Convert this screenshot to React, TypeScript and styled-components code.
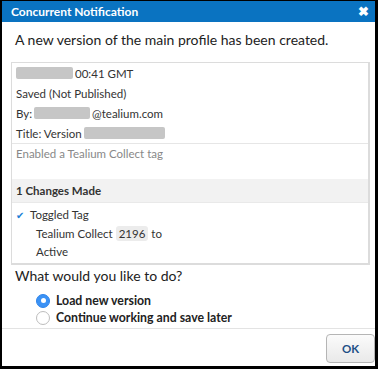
import React from "react";
import styled, { createGlobalStyle } from "styled-components";

const Global = createGlobalStyle`
  html, body { margin: 0; padding: 0; background: #000; }
  body { font-family: Lato, "Open Sans", sans-serif; }
  * { box-sizing: border-box; }
`;

const Frame = styled.div`
  width: 378px;
  height: 369px;
  background: #000;
  padding: 1px 3px 3px 2px;
`;

const Dialog = styled.div`
  width: 100%;
  height: 100%;
  background: #fff;
  display: flex;
  flex-direction: column;
  overflow: hidden;
  white-space: nowrap;
`;

const TitleBar = styled.div`
  height: 21px;
  flex-shrink: 0;
  background: #0a73c1;
  color: #fff;
  display: flex;
  align-items: center;
  justify-content: space-between;
  padding: 0 6px 0 9px;
  font-weight: bold;
  font-size: 12px;
`;

const Close = styled.span`
  font-size: 13px;
  font-weight: bold;
  line-height: 1;
`;

const Lead = styled.div`
  font-size: 14px;
  color: #222;
  padding: 9px 0 0 13px;
  height: 40px;
  flex-shrink: 0;
`;

const Box = styled.div`
  margin: 0 5px 0 9px;
  border: 1px solid #dcdcdc;
  border-bottom-width: 2px;
  border-right-width: 2px;
  display: flex;
  flex-direction: column;
  font-size: 11.5px;
  color: #333;
  flex-shrink: 0;
`;

const Meta = styled.div`
  padding: 0 4px;
  border-bottom: 1px solid #e6e6e6;
`;

const Line = styled.div`
  height: 20px;
  display: flex;
  align-items: center;
  gap: 2px;
`;

const Blur = styled.span<{ w: number }>`
  display: inline-block;
  width: ${(p) => p.w}px;
  height: 12px;
  background: #c6c6c6;
  border-radius: 2px;
`;

const Note = styled.div`
  color: #888;
  padding: 3px 4px 0;
  height: 35px;
`;

const ChangesHead = styled.div`
  background: #f2f2f2;
  border-bottom: 1px solid #e9e9e9;
  height: 24px;
  display: flex;
  align-items: center;
  padding: 0 4px;
  font-weight: bold;
`;

const Changes = styled.div`
  padding: 2px 4px 3px;
`;

const ChangeTitle = styled.div`
  height: 19px;
  display: flex;
  align-items: center;
  gap: 6px;
`;

const Check = styled.span`
  color: #1c7fd6;
  font-size: 10px;
  width: 8px;
`;

const Sub = styled.div`
  height: 18px;
  display: flex;
  align-items: center;
  padding-left: 20px;
  gap: 3px;
`;

const Badge = styled.span`
  background: #ececec;
  border-radius: 3px;
  padding: 0 3px;
  line-height: 15px;
`;

const Question = styled.div`
  font-size: 14px;
  color: #222;
  padding: 2px 0 0 13px;
  height: 25px;
  flex-shrink: 0;
`;

const Options = styled.div`
  display: flex;
  flex-direction: column;
  padding: 2px 0 0 34px;
`;

const Option = styled.label`
  display: flex;
  align-items: center;
  gap: 6px;
  height: 17px;
  font-size: 12.3px;
  font-weight: bold;
  color: #222;
`;

const Radio = styled.span<{ checked?: boolean }>`
  width: 14px;
  height: 14px;
  border-radius: 50%;
  display: inline-flex;
  align-items: center;
  justify-content: center;
  background: ${(p) => (p.checked ? "#3b92f5" : "#fff")};
  border: 1px solid ${(p) => (p.checked ? "#2f84ea" : "#bdbdbd")};
  &::after {
    content: "";
    width: 5px;
    height: 5px;
    border-radius: 50%;
    background: ${(p) => (p.checked ? "#fff" : "transparent")};
  }
`;

const Footer = styled.div`
  margin-top: 2px;
  border-top: 1px solid #e3e3e3;
  display: flex;
  justify-content: flex-end;
  padding: 5px 0 0 0;
`;

const OkButton = styled.button`
  width: 49px;
  height: 29px;
  border: 1px solid #b5b5b5;
  border-radius: 4px;
  background: linear-gradient(#fbfbfb, #e9e9e9);
  color: #1d4f86;
  font-weight: bold;
  font-size: 11.5px;
  font-family: inherit;
`;

export default function App() {
  return (
    <>
      <Global />
      <Frame>
        <Dialog>
          <TitleBar>
            <span>Concurrent Notification</span>
            <Close>✖</Close>
          </TitleBar>
          <Lead>A new version of the main profile has been created.</Lead>
          <Box>
            <Meta>
              <Line>
                <Blur w={57} /> 00:41 GMT
              </Line>
              <Line>Saved (Not Published)</Line>
              <Line>
                By:<Blur w={56} />@tealium.com
              </Line>
              <Line>
                Title: Version <Blur w={81} />
              </Line>
            </Meta>
            <Note>Enabled a Tealium Collect tag</Note>
            <ChangesHead>1 Changes Made</ChangesHead>
            <Changes>
              <ChangeTitle>
                <Check>✔</Check>Toggled Tag
              </ChangeTitle>
              <Sub>
                Tealium Collect <Badge>2196</Badge> to
              </Sub>
              <Sub>Active</Sub>
            </Changes>
          </Box>
          <Question>What would you like to do?</Question>
          <Options>
            <Option>
              <Radio checked />
              Load new version
            </Option>
            <Option>
              <Radio />
              Continue working and save later
            </Option>
          </Options>
          <Footer>
            <OkButton>OK</OkButton>
          </Footer>
        </Dialog>
      </Frame>
    </>
  );
}
